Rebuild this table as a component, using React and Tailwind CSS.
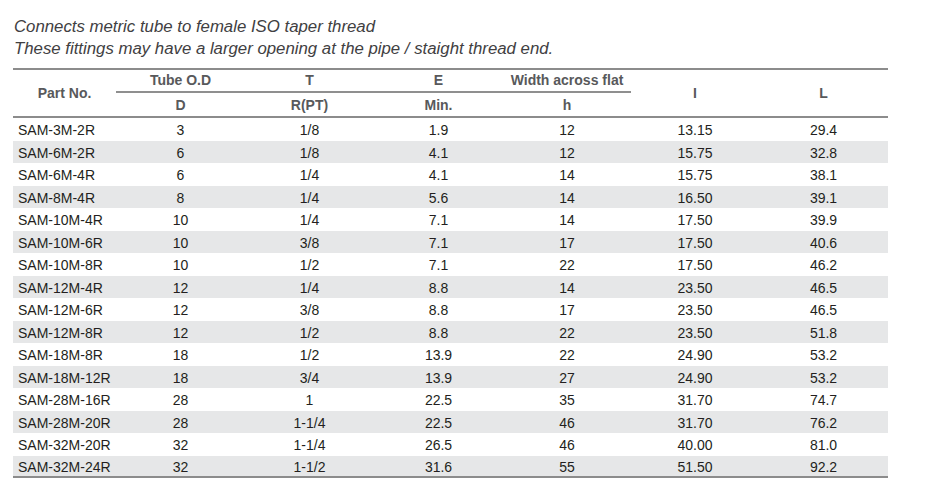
import React from "react";

const rows = [
  ["SAM-3M-2R", "3", "1/8", "1.9", "12", "13.15", "29.4"],
  ["SAM-6M-2R", "6", "1/8", "4.1", "12", "15.75", "32.8"],
  ["SAM-6M-4R", "6", "1/4", "4.1", "14", "15.75", "38.1"],
  ["SAM-8M-4R", "8", "1/4", "5.6", "14", "16.50", "39.1"],
  ["SAM-10M-4R", "10", "1/4", "7.1", "14", "17.50", "39.9"],
  ["SAM-10M-6R", "10", "3/8", "7.1", "17", "17.50", "40.6"],
  ["SAM-10M-8R", "10", "1/2", "7.1", "22", "17.50", "46.2"],
  ["SAM-12M-4R", "12", "1/4", "8.8", "14", "23.50", "46.5"],
  ["SAM-12M-6R", "12", "3/8", "8.8", "17", "23.50", "46.5"],
  ["SAM-12M-8R", "12", "1/2", "8.8", "22", "23.50", "51.8"],
  ["SAM-18M-8R", "18", "1/2", "13.9", "22", "24.90", "53.2"],
  ["SAM-18M-12R", "18", "3/4", "13.9", "27", "24.90", "53.2"],
  ["SAM-28M-16R", "28", "1", "22.5", "35", "31.70", "74.7"],
  ["SAM-28M-20R", "28", "1-1/4", "22.5", "46", "31.70", "76.2"],
  ["SAM-32M-20R", "32", "1-1/4", "26.5", "46", "40.00", "81.0"],
  ["SAM-32M-24R", "32", "1-1/2", "31.6", "55", "51.50", "92.2"],
];

export default function App() {
  return (
    <div
      className="w-[925px] h-[498px] bg-white pl-[13px] pt-[16px]"
      style={{ fontFamily: '"Liberation Sans", Arial, sans-serif' }}
    >
      <div className="pl-[1px] text-[16.8px] leading-[22px] italic text-[#414042]">
        <div>Connects metric tube to female ISO taper thread</div>
        <div>These fittings may have a larger opening at the pipe / staight thread end.</div>
      </div>
      <table className="mt-[8px] w-[875px] table-fixed border-separate border-spacing-0 text-[14px]">
        <colgroup>
          <col className="w-[103px]" />
          <col className="w-[129px]" />
          <col className="w-[129px]" />
          <col className="w-[129px]" />
          <col className="w-[128px]" />
          <col className="w-[128px]" />
          <col className="w-[129px]" />
        </colgroup>
        <thead className="font-bold text-[#58595b]">
          <tr className="h-[24px]">
            <th rowSpan={2} className="border-t-2 border-b-2 border-[#8c8c8c] align-middle text-center font-bold">
              Part No.
            </th>
            <th className="border-t-2 border-b-2 border-t-[#8c8c8c] border-b-[#8f8f8f] align-middle text-center font-bold">
              Tube O.D
            </th>
            <th className="border-t-2 border-b-2 border-t-[#8c8c8c] border-b-[#8f8f8f] align-middle text-center font-bold">
              T
            </th>
            <th className="border-t-2 border-b-2 border-t-[#8c8c8c] border-b-[#8f8f8f] align-middle text-center font-bold">
              E
            </th>
            <th className="border-t-2 border-b-2 border-t-[#8c8c8c] border-b-[#8f8f8f] align-middle text-center font-bold">
              Width across flat
            </th>
            <th rowSpan={2} className="border-t-2 border-b-2 border-[#8c8c8c] align-middle text-center font-bold">
              I
            </th>
            <th rowSpan={2} className="border-t-2 border-b-2 border-[#8c8c8c] align-middle text-center font-bold">
              L
            </th>
          </tr>
          <tr className="h-[25px]">
            <th className="border-b-2 border-[#8c8c8c] pt-[2px] align-middle text-center font-bold">D</th>
            <th className="border-b-2 border-[#8c8c8c] pt-[2px] align-middle text-center font-bold">R(PT)</th>
            <th className="border-b-2 border-[#8c8c8c] pt-[2px] align-middle text-center font-bold">Min.</th>
            <th className="border-b-2 border-[#8c8c8c] pt-[2px] align-middle text-center font-bold">h</th>
          </tr>
        </thead>
        <tbody className="text-[#231f20]">
          {rows.map((r, i) => {
            const last = i === rows.length - 1;
            const bg = i % 2 === 1 ? "bg-[#e6e7e8]" : "bg-white";
            return (
              <tr key={r[0]} className={`h-[22.5px] ${bg}`}>
                {r.map((c, j) => (
                  <td
                    key={j}
                    className={`${j === 0 ? "pl-[5px] text-left" : "text-center"} pt-[2px] p-0 align-middle leading-[16px] ${
                      last ? "border-b-2 border-[#8c8c8c]" : ""
                    }`}
                  >
                    {c}
                  </td>
                ))}
              </tr>
            );
          })}
        </tbody>
      </table>
    </div>
  );
}
